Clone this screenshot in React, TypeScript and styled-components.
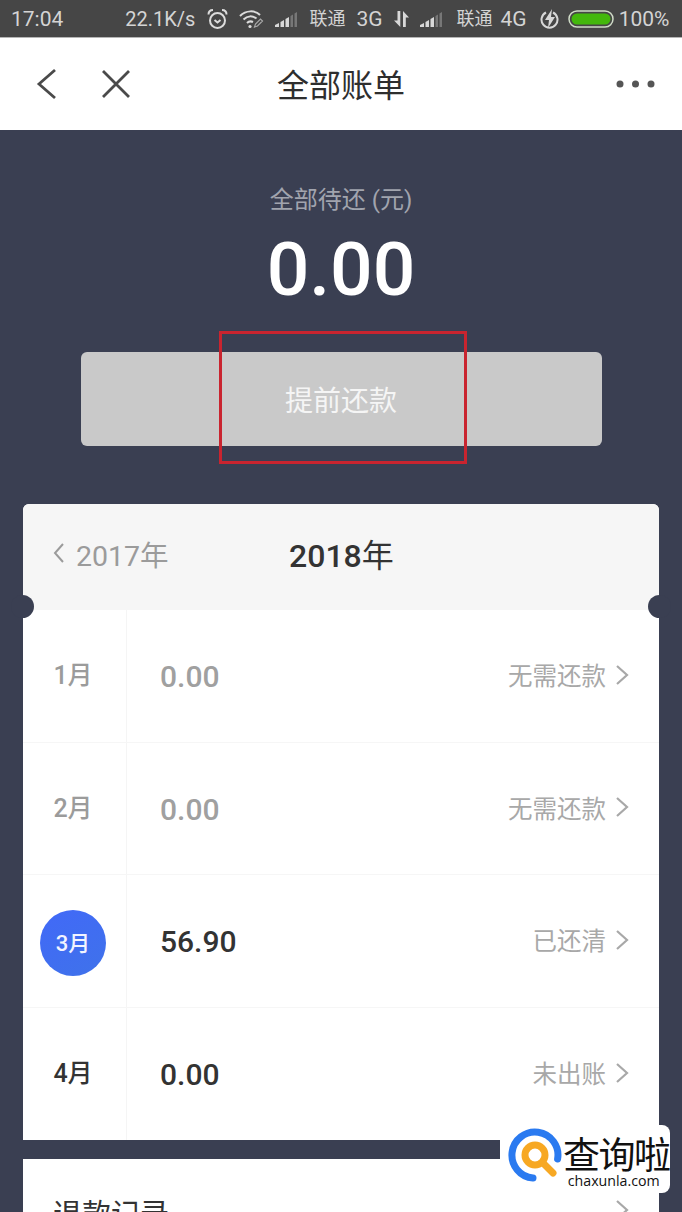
import React from 'react';
import styled, { createGlobalStyle } from 'styled-components';

const GlobalStyle = createGlobalStyle`
  html, body {
    margin: 0;
    padding: 0;
    background: #3a3f52;
  }
  * {
    box-sizing: border-box;
  }
  body {
    font-family: Roboto, "Noto Sans CJK SC", sans-serif;
  }
`;

const Page = styled.div`
  position: relative;
  width: 682px;
  height: 1212px;
  overflow: hidden;
  background: #3a3f52;
  display: flex;
  flex-direction: column;
`;

const StatusBar = styled.div`
  height: 38px;
  flex: none;
  background: #464646;
  border-bottom: 1px solid #b5b5b5;
  color: #d4d4d4;
  display: flex;
  align-items: center;
  padding-left: 11px;
  white-space: nowrap;
`;

const StatusText = styled.span<{ $left?: number; $size?: number }>`
  margin-left: ${(p) => p.$left ?? 0}px;
  font-size: ${(p) => p.$size ?? 20}px;
  line-height: 38px;
`;

const StatusIcon = styled.svg<{ $left?: number }>`
  margin-left: ${(p) => p.$left ?? 0}px;
  flex: none;
`;

const NavBar = styled.div`
  height: 92px;
  flex: none;
  background: #fff;
  display: flex;
  align-items: center;
  padding: 0 26px 0 36px;
`;

const NavButtons = styled.div`
  display: flex;
  align-items: center;
  gap: 43px;
  width: 120px;
`;

const NavTitle = styled.div`
  flex: 1;
  text-align: center;
  color: #2e2e2e;
  font-size: 32px;
  line-height: 40px;
  padding: 3px 90px 0 0;
`;

const Hero = styled.div`
  height: 374px;
  flex: none;
  padding-top: 53px;
  display: flex;
  flex-direction: column;
  align-items: center;
`;

const HeroLabel = styled.div`
  color: #a1a4ae;
  font-size: 24px;
  line-height: 34px;
`;

const Amount = styled.div`
  color: #fff;
  font-size: 75px;
  font-weight: 500;
  line-height: 84px;
  margin-top: 10px;
`;

const RepayButton = styled.button`
  width: 521px;
  height: 94px;
  margin-top: 41px;
  border: none;
  border-radius: 6px;
  background: #c9c9c9;
  color: #f5f5f5;
  font-family: inherit;
  font-size: 28px;
`;

const Highlight = styled.div`
  position: absolute;
  left: 219px;
  top: 331px;
  width: 248px;
  height: 133px;
  border: 3px solid #c9242f;
`;

const Card = styled.div`
  position: relative;
  width: 636px;
  margin-left: 23px;
  border-radius: 6px 6px 0 0;
  background: #fff;
  flex: none;
`;

const YearHeader = styled.div`
  position: relative;
  height: 106px;
  background: #f6f6f6;
  border-radius: 6px 6px 0 0;
  display: flex;
  align-items: center;
  padding: 0 0 8px 30px;
`;

const PrevYear = styled.div`
  display: flex;
  align-items: center;
  gap: 11px;
  color: #9b9b9b;
  font-size: 28.5px;
  width: 236px;
`;

const CurrentYear = styled.div`
  color: #333;
  font-size: 32px;
  font-weight: 500;
`;

const YearUnit = styled.span`
  font-weight: 400;
`;

const Notch = styled.div<{ $side: 'left' | 'right' }>`
  position: absolute;
  bottom: -8px;
  ${(p) => p.$side}: -12px;
  width: 23px;
  height: 23px;
  border-radius: 50%;
  background: #3a3f52;
  z-index: 1;
`;

const Row = styled.div`
  height: 132.5px;
  display: grid;
  grid-template-columns: 104px 1fr auto;
  align-items: stretch;
  border-bottom: 1px solid #f6f6f6;
  &:last-child {
    border-bottom: none;
  }
`;

const MonthCell = styled.div<{ $muted?: boolean }>`
  display: flex;
  align-items: center;
  justify-content: center;
  border-right: 1px solid #f5f5f5;
  color: ${(p) => (p.$muted ? '#9b9b9b' : '#333')};
  font-size: 25px;
  font-weight: 500;
  padding: 0 3px 5px 0;
`;

const MonthBadge = styled.div`
  width: 66px;
  height: 66px;
  border-radius: 50%;
  margin-top: 9px;
  background: linear-gradient(150deg, #4169f8, #3f72ea);
  color: #f2f4ff;
  font-size: 22px;
  display: flex;
  align-items: center;
  justify-content: center;
  padding-bottom: 3px;
`;

const Value = styled.div<{ $muted?: boolean }>`
  display: flex;
  align-items: center;
  padding: 2px 0 0 33px;
  color: ${(p) => (p.$muted ? '#a0a0a0' : '#333')};
  font-size: 30px;
  font-weight: 500;
`;

const RowStatus = styled.div`
  display: flex;
  align-items: center;
  gap: 9px;
  padding: 0 30px 2px 0;
  color: #a8a8a8;
  font-size: 24.5px;
`;

const RefundCard = styled(Card)`
  margin-top: 19px;
  height: 200px;
  border-radius: 0;
  padding: 36px 0 0 30px;
  color: #333;
  font-size: 29px;
  line-height: 40px;
`;

const RefundChevron = styled.svg`
  position: absolute;
  right: 30px;
  top: 40px;
`;

const Watermark = styled.div`
  position: absolute;
  left: 500px;
  top: 1125px;
  width: 170px;
  height: 68px;
  background: #fff;
  border-radius: 0 8px 8px 0;
  display: flex;
  align-items: flex-start;
  padding: 2px 0 0 7px;
`;

const WatermarkText = styled.div`
  padding-top: 7px;
  display: flex;
  flex-direction: column;
  align-items: center;
  color: #111;
`;

const WatermarkName = styled.div`
  font-family: "Noto Sans CJK SC", sans-serif;
  font-size: 37px;
  line-height: 38px;
  letter-spacing: -1.5px;
`;

const WatermarkUrl = styled.div`
  margin: 1px 5px 0 0;
  font-family: "Open Sans", sans-serif;
  font-size: 14.2px;
  line-height: 16px;
`;

const Chevron = () => (
  <svg width="14" height="22" viewBox="0 0 14 22" fill="none" stroke="#a8a8a8" strokeWidth="2.2">
    <path d="M2 2l10 9-10 9" />
  </svg>
);

const rows = [
  { month: '1月', value: '0.00', status: '无需还款', muted: true },
  { month: '2月', value: '0.00', status: '无需还款', muted: true },
  { month: '3月', value: '56.90', status: '已还清', active: true },
  { month: '4月', value: '0.00', status: '未出账' },
];

const SignalIcon = ({ left }: { left: number }) => (
  <StatusIcon $left={left} width="24" height="18" viewBox="0 0 24 18">
    <path d="M1 17v-2l4-2v4zM6.500 17v-5l3.500-2v7zM11.500 17V9l3.500-2v10z" fill="#d8d8d8" />
    <path d="M16.500 17V6L19 4.500V17zM20.500 17V3.500L23 2v15z" fill="#777" />
  </StatusIcon>
);

const App = () => (
  <Page>
    <GlobalStyle />
    <StatusBar>
      <StatusText $size={21}>17:04</StatusText>
      <StatusText $left={62}>22.1K/s</StatusText>
      <StatusIcon $left={12} width="21" height="22" viewBox="0 0 21 22" fill="none" stroke="#dcdcdc" strokeWidth="2">
        <circle cx="10.500" cy="12.500" r="7.500" />
        <path d="M7.500 12l3 2.500 3-2.500" />
        <path d="M1.500 6.500c0-3 2-4.500 4.500-4.500M19.500 6.500c0-3-2-4.500-4.500-4.500" />
      </StatusIcon>
      <StatusIcon $left={11} width="25" height="20" viewBox="0 0 25 20" fill="none" stroke="#dcdcdc" strokeWidth="2">
        <path d="M1 7c6-6 15-6 20-1M4.500 10.500c4-4 9-4 13-1M8 14c2-2 4-2 6-1" />
        <circle cx="11" cy="17.500" r="1.600" fill="#dcdcdc" stroke="none" />
        <path d="M15.500 18l1-3 5-5 2 2-5 5z" stroke="#a8a8a8" strokeWidth="1.200" />
      </StatusIcon>
      <SignalIcon left={10} />
      <StatusText $left={11} $size={18}>联通</StatusText>
      <StatusText $left={11} $size={21}>3G</StatusText>
      <StatusIcon $left={10} width="17" height="20" viewBox="0 0 17 20" fill="#d8d8d8">
        <path d="M4.500 2h2.800v16L1 11.500h3.500zM10 18V2l6 6.500h-3.200V18z" />
      </StatusIcon>
      <SignalIcon left={9} />
      <StatusText $left={14} $size={18}>联通</StatusText>
      <StatusText $left={8} $size={21}>4G</StatusText>
      <StatusIcon $left={13} width="19" height="22" viewBox="0 0 19 22" fill="none">
        <path d="M6 4.500a8 8 0 1 0 7 0" stroke="#d8d8d8" strokeWidth="2" />
        <path d="M12 1L5 12h4l-1 8 7-11h-4z" fill="#d8d8d8" />
      </StatusIcon>
      <StatusIcon $left={9} width="46" height="18" viewBox="0 0 46 18">
        <rect x="1" y="1" width="44" height="16" rx="8" fill="#464646" stroke="#d0dcc8" strokeWidth="1.500" />
        <rect x="3.500" y="3.500" width="39" height="11" rx="5.500" fill="#43b80c" />
      </StatusIcon>
      <StatusText $left={5} $size={21}>100%</StatusText>
    </StatusBar>

    <NavBar>
      <NavButtons>
        <svg width="22" height="32" viewBox="0 0 22 32" fill="none" stroke="#4a4a4a" strokeWidth="2.800">
          <path d="M19 2L3 16l16 14" />
        </svg>
        <svg width="30" height="30" viewBox="0 0 30 30" fill="none" stroke="#4a4a4a" strokeWidth="2.800">
          <path d="M2 2l26 26M28 2L2 28" />
        </svg>
      </NavButtons>
      <NavTitle>全部账单</NavTitle>
      <svg width="40" height="8" viewBox="0 0 40 8" fill="#555">
        <circle cx="4" cy="4" r="3.500" />
        <circle cx="19.500" cy="4" r="3.500" />
        <circle cx="35" cy="4" r="3.500" />
      </svg>
    </NavBar>

    <Hero>
      <HeroLabel>全部待还 (元)</HeroLabel>
      <Amount>0.00</Amount>
      <RepayButton type="button">提前还款</RepayButton>
    </Hero>

    <Card>
      <YearHeader>
        <PrevYear>
          <svg width="12" height="22" viewBox="0 0 12 22" fill="none" stroke="#9b9b9b" strokeWidth="2">
            <path d="M10 2L2 11l8 9" />
          </svg>
          2017年
        </PrevYear>
        <CurrentYear>
          2018<YearUnit>年</YearUnit>
        </CurrentYear>
        <Notch $side="left" />
        <Notch $side="right" />
      </YearHeader>
      {rows.map((row) => (
        <Row key={row.month}>
          <MonthCell $muted={row.muted}>
            {row.active ? <MonthBadge>{row.month}</MonthBadge> : row.month}
          </MonthCell>
          <Value $muted={row.muted}>{row.value}</Value>
          <RowStatus>
            {row.status}
            <Chevron />
          </RowStatus>
        </Row>
      ))}
    </Card>

    <RefundCard>
      退款记录
      <RefundChevron width="14" height="22" viewBox="0 0 14 22" fill="none" stroke="#a8a8a8" strokeWidth="2.200">
        <path d="M2 2l10 9-10 9" />
      </RefundChevron>
    </RefundCard>

    <Highlight />

    <Watermark>
      <svg width="56" height="56" viewBox="0 0 56 56" fill="none">
        <path d="M50.600 32A23 23 0 1 0 26 51" stroke="#2a7af0" strokeWidth="7" strokeLinecap="round" />
        <circle cx="28" cy="28" r="10" stroke="#f7a823" strokeWidth="7" />
        <path d="M36 36l10 10" stroke="#f7a823" strokeWidth="7" strokeLinecap="round" />
      </svg>
      <WatermarkText>
        <WatermarkName>查询啦</WatermarkName>
        <WatermarkUrl>chaxunla.com</WatermarkUrl>
      </WatermarkText>
    </Watermark>
  </Page>
);

export default App;
